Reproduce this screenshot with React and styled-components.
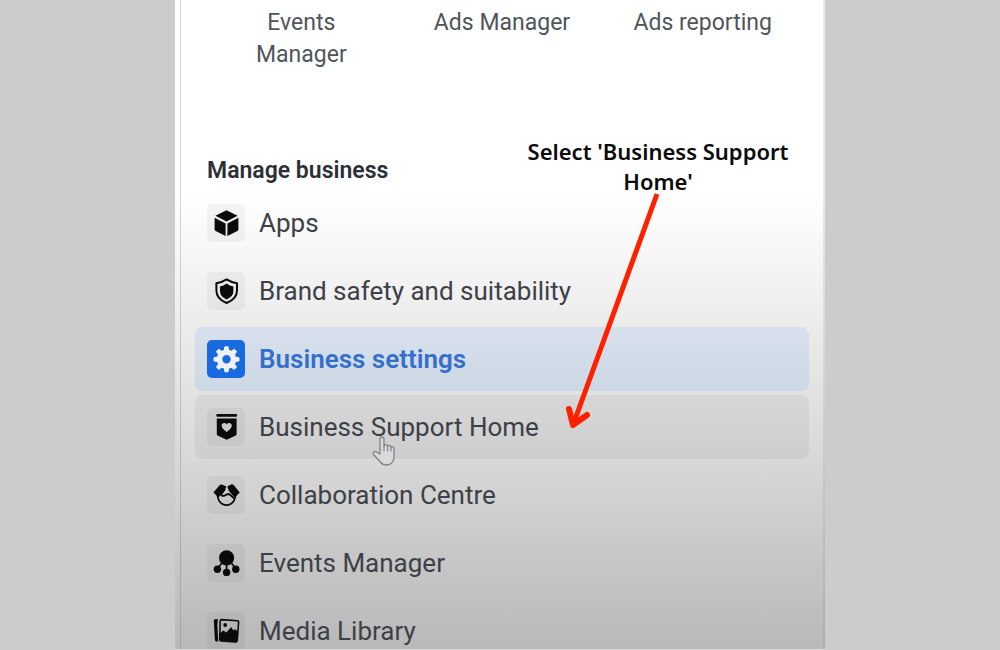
import React from "react"
import styled, { createGlobalStyle, css } from "styled-components"

const GlobalStyle = createGlobalStyle`
    * {
        box-sizing: border-box;
    }
    body {
        margin: 0;
        background: #cbccce;
        font-family: Roboto, "Liberation Sans", sans-serif;
    }
`
const Page = styled.main`
    display: flex;
    justify-content: center;
    height: 100vh;
    overflow: hidden;
`
const Panel = styled.div`
    display: flex;
    width: 65%;
    padding-left: 5px;
    background: linear-gradient(#fff 30%, #fafafa 35%, #ebebeb 51%, #d9d9d9 70%, #c8c8c8 85%, #b9b9b9 100%);
    border-bottom: 1px solid #dcdcdc;
`
const Screen = styled.div`
    flex: 1;
    overflow: hidden;
    border-left: 1px solid rgba(90, 90, 100, .25);
    border-right: 2px solid rgba(90, 90, 100, .12);
`
const Shortcuts = styled.nav`
    display: grid;
    grid-template-columns: repeat(3, 1fr);
    padding: 7px 20px 0;
`
const Shortcut = styled.a`
    padding: 0 24px;
    color: #50555b;
    font-size: 23px;
    line-height: 32px;
    text-align: center;
    text-decoration: none;
`
const Section = styled.section`
    position: relative;
    padding: 84px 14px 0;
`
const Heading = styled.h2`
    margin: 0 12px 4px;
    color: #2c3036;
    font-size: 23px;
    font-weight: 600;
    line-height: 32px;
`
const List = styled.ul`
    display: flex;
    flex-direction: column;
    gap: 4px;
    margin: 0;
    padding: 0;
    list-style: none;
`
const active = css`
    background: linear-gradient(#d8e0ed, #cdd8e5);
    color: #3470cb;
    font-weight: 600;
`
const hovered = css`
    background: linear-gradient(#d7d7d7, #cecece);
`
const ItemLink = styled.a`
    position: relative;
    display: flex;
    align-items: center;
    gap: 14px;
    height: 64px;
    padding: 0 12px;
    border-radius: 8px;
    color: #3d4147;
    font-size: 26px;
    text-decoration: none;
    ${props => props.$state === "active" && active}
    ${props => props.$state === "hovered" && hovered}
`
const IconBox = styled.span`
    display: flex;
    width: 38px;
    height: 38px;
    border-radius: 5px;
    background: ${props => props.$active ? "#176ae0" : "rgba(0, 0, 0, .04)"};
    color: ${props => props.$active ? "#eef1f5" : "#0a0a0a"};
`
const Pointer = styled.svg`
    position: absolute;
    left: 176px;
    top: 40px;
`
const Callout = styled.aside`
    position: absolute;
    top: 65px;
    right: 25px;
    width: 280px;
    color: #0b0b0b;
    font-family: "Noto Sans", sans-serif;
    font-size: 22px;
    font-weight: 600;
    line-height: 30px;
    text-align: center;
    pointer-events: none;
`
const CalloutText = styled.p`
    margin: 0;
`
const Arrow = styled.svg`
    position: absolute;
    left: 41px;
    top: 56px;
`

const Icon = ({ children }) => (
    <svg width="38" height="38" viewBox="0 0 38 38" fill="currentColor" aria-hidden="true">{children}</svg>
)

const CubeIcon = () => (
    <Icon>
        <path d="M19.5 6.2 30.6 11.8 19.5 17.6 8.4 11.8Z" />
        <path d="M7.6 13.8 18.6 19.4V32L8.6 26.9Q7.6 26.3 7.6 25.2Z" />
        <path d="M31.4 13.8 20.4 19.4V32L30.4 26.9Q31.4 26.3 31.4 25.2Z" />
    </Icon>
)
const ShieldIcon = () => (
    <Icon>
        <path d="M19.6 7.4 Q24.3 10.4 30 11.3 V18.5 Q30 27 19.6 31 Q9.4 27 9.4 18.5 V11.3 Q15 10.4 19.6 7.4Z" fill="none" stroke="currentColor" strokeWidth="2" strokeLinejoin="round" />
        <path d="M19.6 11.4 Q22.8 13.8 26.4 14.4 V19 Q26.4 24.6 19.6 27.4 Q13 24.6 13 19 V14.4 Q16.4 13.8 19.6 11.4Z" />
    </Icon>
)
const GearIcon = () => (
    <Icon>
        <circle cx="19.5" cy="19.3" r="7" fill="none" stroke="currentColor" strokeWidth="5.6" />
        {[0, 45, 90, 135, 180, 225, 270, 315].map(angle => (
            <path key={angle} d="M17.2 11 17.9 6.8H21.1L21.8 11Z" stroke="currentColor" strokeWidth="1" strokeLinejoin="round" transform={`rotate(${angle} 19.5 19.3)`} />
        ))}
    </Icon>
)
const BadgeIcon = () => (
    <Icon>
        <rect x="9.3" y="6" width="20.8" height="2.8" rx="1.2" />
        <path fillRule="evenodd" d="M9.8 10.6H29.6V26.2Q29.6 27 28.8 27.4L19.7 31.8 10.6 27.4Q9.8 27 9.8 26.2Z M19.7 24C16.6 21.8 14.6 20 14.6 17.6 14.6 14.6 18.2 14 19.7 16.4 21.2 14 24.8 14.6 24.8 17.6 24.8 20 22.8 21.8 19.7 24Z" />
    </Icon>
)
const HandshakeIcon = () => (
    <Icon>
        <path d="M6.4 16.4 12.8 9Q13.6 8.2 14.8 8.6L19.4 10.4 17.6 14.6 11.6 21.6Z" />
        <path d="M32.8 16.4 26.4 8.8Q25.8 8 24.6 8.2L20.2 10.4 22 15.2 27.8 21.6Z" />
        <g fill="none" stroke="currentColor" strokeWidth="1.8" strokeLinecap="round" strokeLinejoin="round">
            <path d="M10.6 19.5Q11 25 15 27.8 19.4 30.6 24 27.8 28 25 28.4 19.5" />
            <path d="M17.6 13.6 14 18.4Q14.8 20.8 18 19.4L20.8 18Q23.2 18.2 26.6 22" />
        </g>
    </Icon>
)
const PeopleIcon = () => (
    <Icon>
        <circle cx="19.6" cy="13.8" r="7.6" />
        <circle cx="10.4" cy="25.2" r="3.7" />
        <circle cx="19.6" cy="28.4" r="3.7" />
        <circle cx="28.8" cy="25.2" r="3.7" />
        <path d="M19.6 20V27M15.6 18 11 24M23.6 18 28.2 24" fill="none" stroke="currentColor" strokeWidth="1.7" />
    </Icon>
)
const MediaIcon = () => (
    <Icon>
        <path d="M6.8 8.6Q6.8 7.4 8 7.3L10.9 7 10.4 13 11.2 29.6 9.2 29.4Q8 29.2 7.9 28Z" />
        <path d="M14.6 7.6 30.4 8.8Q31.8 9 31.6 10.4L30.2 28.6Q30 30 28.6 29.9L14 28.9Q12.6 28.7 12.7 27.3L13.2 8.8Q13.3 7.6 14.6 7.6Z" fill="none" stroke="currentColor" strokeWidth="1.6" />
        <circle cx="18.2" cy="13" r="1.9" />
        <path d="M13 21.2 16.2 18.4 19.4 20.6 24.2 15 26.4 18.4 28 17 31 20 30 29.6 13 28.6Z" />
    </Icon>
)
const HandPointer = () => (
    <Pointer width="26" height="32" viewBox="0 0 26 32" aria-hidden="true">
        <path
            d="M9 19V4.2Q9 2 11 2T13 4.2V11Q13.4 9.4 15 9.6T16.6 11.4Q17.2 10.2 18.6 10.4T20 12.2Q20.6 11.4 21.8 11.8T23 13.8V22Q23 25 21.4 27.2 19.4 30 15.4 30T9.4 27L3 20Q1.2 17.6 3 16.8T6 17.4Z"
            fill="#dadada" stroke="#85868a" strokeWidth="1.4" strokeLinejoin="round"
        />
        <path d="M13 11V16M16.6 11.6V16M20 12.4V16" fill="none" stroke="#85868a" strokeWidth="1.2" strokeLinecap="round" />
    </Pointer>
)

const shortcuts = ["Events Manager", "Ads Manager", "Ads reporting"]
const items = [
    { label: "Apps", icon: CubeIcon },
    { label: "Brand safety and suitability", icon: ShieldIcon },
    { label: "Business settings", icon: GearIcon, state: "active" },
    { label: "Business Support Home", icon: BadgeIcon, state: "hovered" },
    { label: "Collaboration Centre", icon: HandshakeIcon },
    { label: "Events Manager", icon: PeopleIcon },
    { label: "Media Library", icon: MediaIcon },
]

export default function App() {
    return (
        <Page>
            <GlobalStyle />
            <Panel>
                <Screen>
                    <Shortcuts>
                        {shortcuts.map(label => <Shortcut href="#" key={label}>{label}</Shortcut>)}
                    </Shortcuts>
                    <Section>
                        <Heading>Manage business</Heading>
                        <List>
                            {items.map(({ label, icon: ItemIcon, state }) => (
                                <li key={label}>
                                    <ItemLink href="#" $state={state}>
                                        <IconBox $active={state === "active"}><ItemIcon /></IconBox>
                                        {label}
                                        {state === "hovered" && <HandPointer />}
                                    </ItemLink>
                                </li>
                            ))}
                        </List>
                        <Callout>
                            <CalloutText>Select 'Business Support Home'</CalloutText>
                            <Arrow width="110" height="245" viewBox="0 0 110 245" fill="none" stroke="#ff2000" strokeWidth="5" aria-hidden="true">
                                <path d="M98 2 14 233" />
                                <path d="M10 217 14 233 28 223" strokeWidth="6" strokeLinecap="round" strokeLinejoin="round" />
                            </Arrow>
                        </Callout>
                    </Section>
                </Screen>
            </Panel>
        </Page>
    )
}
